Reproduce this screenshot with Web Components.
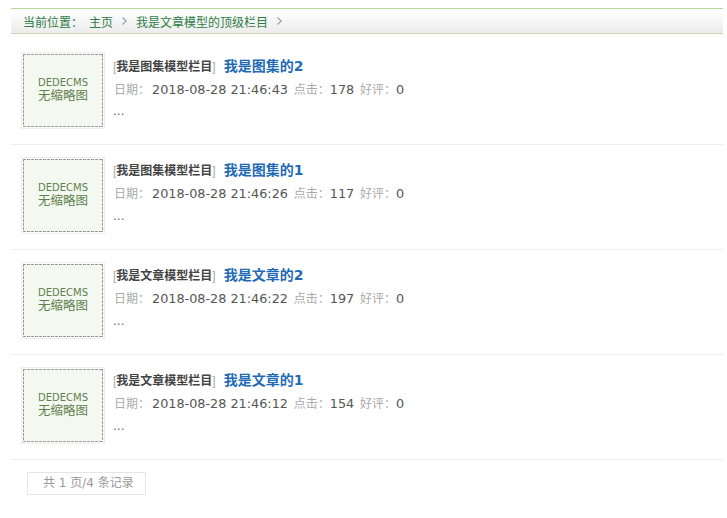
<!DOCTYPE html>
<html lang="zh">
<head>
<meta charset="utf-8">
<title>列表</title>
<style>
  html, body {
    margin: 0;
    background: #fff;
    overflow: hidden;
  }

  body {
    padding: 8px 4px 0 11px;
    font: 12px "DejaVu Sans", "Noto Sans CJK SC", sans-serif;
    color: #555;
  }
</style>
</head>
<body>
<crumb-bar>
  <a>主页</a>
  <a>我是文章模型的顶级栏目</a>
</crumb-bar>
<article-list>
  <article-row style="--info-top: 6px; --meta-height: 21.5px" type="我是图集模型栏目" title="我是图集的2" date="2018-08-28 21:46:43" hits="178" good="0"></article-row>
  <article-row type="我是图集模型栏目" title="我是图集的1" date="2018-08-28 21:46:26" hits="117" good="0"></article-row>
  <article-row type="我是文章模型栏目" title="我是文章的2" date="2018-08-28 21:46:22" hits="197" good="0"></article-row>
  <article-row type="我是文章模型栏目" title="我是文章的1" date="2018-08-28 21:46:12" hits="154" good="0"></article-row>
</article-list>
<page-info>共 1 页/4 条记录</page-info>

<script>
const fonts = `"DejaVu Sans", "Noto Sans CJK SC", sans-serif`;

class CrumbBar extends HTMLElement {
  constructor() {
    super();
    this.attachShadow({ mode: 'open' });
    const links = Array.from(this.querySelectorAll('a')).map(a => `
      <span>${a.textContent}</span>
      <svg width="5" height="8" viewBox="0 0 5 8"><path d="M.5 .5l3.8 3.5-3.8 3.5" fill="none" stroke="#8f9f9f" stroke-width="1.1"/></svg>
    `).join('');
    this.shadowRoot.innerHTML = `
      <style>
        :host {
          display: block;
          height: 24px;
          border-top: 1px solid #b5d99a;
          border-bottom: 1px solid #c5d9b0;
          background: linear-gradient(#fff, #ececec);
          font: 12px ${fonts};
          color: #2e7d45;
        }
        div {
          display: flex;
          align-items: center;
          height: 100%;
          padding-left: 12px;
        }
        span {
          margin-right: 9px;
        }
        span:first-child {
          margin-right: 6px;
        }
        svg {
          margin-right: 9px;
        }
      </style>
      <div><span>当前位置：</span>${links}</div>
    `;
  }
}

class ArticleList extends HTMLElement {
  constructor() {
    super();
    this.attachShadow({ mode: 'open' });
    this.shadowRoot.innerHTML = `
      <style>
        :host {
          display: block;
          padding-top: 6px;
        }
      </style>
      <slot></slot>
    `;
  }
}

class ArticleRow extends HTMLElement {
  constructor() {
    super();
    this.attachShadow({ mode: 'open' });
    const attr = name => this.getAttribute(name);
    this.shadowRoot.innerHTML = `
      <style>
        :host {
          display: flex;
          gap: 8px;
          padding: 12px 0 15px 10px;
          border-bottom: 1px solid #eee;
          font: 12px ${fonts};
          color: #555;
        }
        .thumb {
          box-sizing: border-box;
          flex: none;
          width: 84px;
          height: 77px;
          padding: 1px;
          border: 1px solid #eee;
        }
        .thumb div {
          box-sizing: border-box;
          display: flex;
          flex-direction: column;
          align-items: center;
          justify-content: center;
          height: 100%;
          padding-bottom: 3px;
          background:
            repeating-linear-gradient(90deg, #999 0 3px, transparent 3px 4px) 0 0 / 100% 1px no-repeat,
            repeating-linear-gradient(90deg, #999 0 3px, transparent 3px 4px) 0 100% / 100% 1px no-repeat,
            repeating-linear-gradient(#999 0 3px, transparent 3px 4px) 0 0 / 1px 100% no-repeat,
            repeating-linear-gradient(#999 0 3px, transparent 3px 4px) 100% 0 / 1px 100% no-repeat,
            #f3f9f1;
          color: #5f7f4c;
          line-height: 13px;
        }
        .thumb span {
          font-size: 10px;
        }
        .thumb b {
          font-weight: normal;
          font-size: 12.5px;
        }
        .info {
          display: flex;
          flex-direction: column;
          padding-top: var(--info-top, 5px);
        }
        .head, .meta, .intro {
          height: 22.5px;
          line-height: 18px;
          white-space: nowrap;
        }
        .head {
          display: flex;
          align-items: center;
          gap: 8px;
          height: 18px;
          padding-bottom: 4.5px;
        }
        .meta {
          height: var(--meta-height, 22.5px);
          color: #aaa;
          padding-left: 1px;
        }
        .kind {
          font-family: "Liberation Sans", ${fonts};
          color: #aaa;
        }
        .kind b {
          font-family: ${fonts};
          color: #444;
        }
        .name {
          margin-top: -2px;
          font-weight: bold;
          font-size: 14px;
          color: #1f6bb5;
        }
        .meta span {
          margin-right: 2px;
          font-size: 12.8px;
          color: #555;
        }
        .meta span:first-child {
          margin-left: 2px;
        }
        .intro {
          color: #667;
        }
      </style>
      <div class="thumb"><div><span>DEDECMS</span><b>无缩略图</b></div></div>
      <div class="info">
        <div class="head"><span class="kind">[<b>${attr('type')}</b>]</span><span class="name">${attr('title')}</span></div>
        <div class="meta">日期：<span>${attr('date')}</span> 点击：<span>${attr('hits')}</span> 好评：<span>${attr('good')}</span></div>
        <div class="intro">...</div>
      </div>
    `;
  }
}

class PageInfo extends HTMLElement {
  constructor() {
    super();
    this.attachShadow({ mode: 'open' });
    this.shadowRoot.innerHTML = `
      <style>
        :host {
          display: block;
          width: fit-content;
          margin: 12px 0 0 16px;
          padding: 0 11px 0 15px;
          height: 21px;
          border: 1px solid #e6e6e6;
          font: 12px/21px ${fonts};
          color: #999;
        }
      </style>
      <slot></slot>
    `;
  }
}

customElements.define('crumb-bar', CrumbBar);
customElements.define('article-list', ArticleList);
customElements.define('article-row', ArticleRow);
customElements.define('page-info', PageInfo);
</script>
</body>
</html>
